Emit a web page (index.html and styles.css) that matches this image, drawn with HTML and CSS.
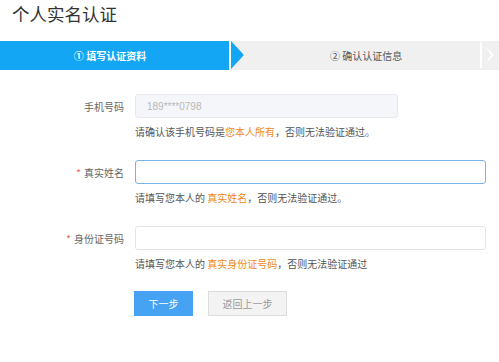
FILE: index.html
```html
<!DOCTYPE html>
<html lang="zh-CN">
<head>
    <meta charset="UTF-8">
    <meta name="viewport" content="width=device-width, initial-scale=1.0">
    <title>个人实名认证</title>
    <link rel="stylesheet" href="styles.css">
</head>
<body>
    <h1 class="page-title">个人实名认证</h1>

    <div class="steps">
        <div class="step step-active">① 填写认证资料</div>
        <div class="step step-next">② 确认认证信息</div>
    </div>

    <form class="form">
        <div class="form-row">
            <label class="form-label">手机号码</label>
            <input class="form-input input-phone" type="text" placeholder="189****0798" disabled>
        </div>
        <p class="hint">请确认该手机号码是<span class="highlight">您本人所有</span>，否则无法验证通过。</p>

        <div class="form-row">
            <label class="form-label"><span class="req">*</span>真实姓名</label>
            <input class="form-input input-focus" type="text">
        </div>
        <p class="hint">请填写您本人的 <span class="highlight">真实姓名</span>，否则无法验证通过。</p>

        <div class="form-row">
            <label class="form-label"><span class="req">*</span>身份证号码</label>
            <input class="form-input" type="text">
        </div>
        <p class="hint">请填写您本人的 <span class="highlight">真实身份证号码</span>，否则无法验证通过</p>

        <div class="actions">
            <button type="button" class="btn btn-primary">下一步</button>
            <button type="button" class="btn btn-default">返回上一步</button>
        </div>
    </form>
</body>
</html>
```

FILE: styles.css
```css
:root {
    --step-blue: #13a6f5;
    --step-grey: #f0f0f0;
    --btn-blue: #46a3f3;
    --orange: #f0891a;
    --text-color: #666;
}

body {
    margin: 0;
    font-family: "Noto Sans CJK SC", "Liberation Sans", sans-serif;
    color: var(--text-color);
    background: #fff;
}

.page-title {
    margin: 0;
    padding: 1px 12px 0;
    font-size: 17.5px;
    font-weight: normal;
    line-height: 26px;
    color: #333;
}

/* steps bar */
.steps {
    display: flex;
    height: 29px;
    margin-top: 14px;
    background: var(--step-grey);
}

.step {
    position: relative;
    line-height: 29px;
    font-size: 10px;
    white-space: nowrap;
}

.step::before,
.step::after {
    content: "";
    position: absolute;
    top: 0;
    width: 0;
    height: 0;
    border-top: 14.5px solid transparent;
    border-bottom: 14.5px solid transparent;
}

.step::before {
    left: 100%;
    border-left: 16px solid #fff;
    z-index: 1;
}

.step::after {
    left: calc(100% + 2px);
    z-index: 2;
}

.step-active {
    width: 229px;
    padding-right: 9px;
    box-sizing: border-box;
    text-align: center;
    background: var(--step-blue);
    color: #fff;
    font-weight: bold;
}

.step-active::after {
    border-left: 13px solid var(--step-blue);
}

.step-next {
    width: 251px;
    padding-left: 101px;
    box-sizing: border-box;
    color: #555;
}

.step-next::before {
    border-left-width: 14px;
}

.step-next::after {
    border-left: 9px solid var(--step-grey);
}

/* form */
.form {
    margin: 0;
    padding-top: 24px;
}

.form-row {
    display: flex;
    align-items: center;
    margin-top: 21px;
}

.form-row:first-child {
    margin-top: 0;
}

.form-label {
    width: 124px;
    margin-right: 11px;
    text-align: right;
    font-size: 10px;
}

.req {
    margin-right: 3px;
    color: #e8604c;
}

.form-input {
    width: 351px;
    height: 24px;
    box-sizing: border-box;
    padding: 0 11px;
    border: 1px solid #e3e4e8;
    border-radius: 3px;
    background: #fff;
    font-family: "Liberation Sans", sans-serif;
    font-size: 10px;
    outline: none;
}

.input-phone {
    width: 263px;
    background: #f5f6fa;
    border-color: #e8e9ee;
}

.input-phone::placeholder {
    color: #b8b8b8;
}

.input-focus {
    border-color: #7cb0e8;
}

.hint {
    margin: 7px 0 0 135px;
    font-size: 10px;
    line-height: 14px;
    color: #555;
}

.highlight {
    color: var(--orange);
}

.actions {
    display: flex;
    gap: 15px;
    margin: 20px 0 0 134px;
}

.btn {
    height: 25px;
    padding: 0;
    border: 1px solid transparent;
    font-family: "Noto Sans CJK SC", sans-serif;
    font-size: 10px;
    cursor: pointer;
}

.btn-primary {
    width: 59px;
    background: var(--btn-blue);
    border-color: var(--btn-blue);
    color: #fff;
}

.btn-default {
    width: 79px;
    background: #f3f3f3;
    border-color: #dcdcdc;
    color: #999;
}
```
